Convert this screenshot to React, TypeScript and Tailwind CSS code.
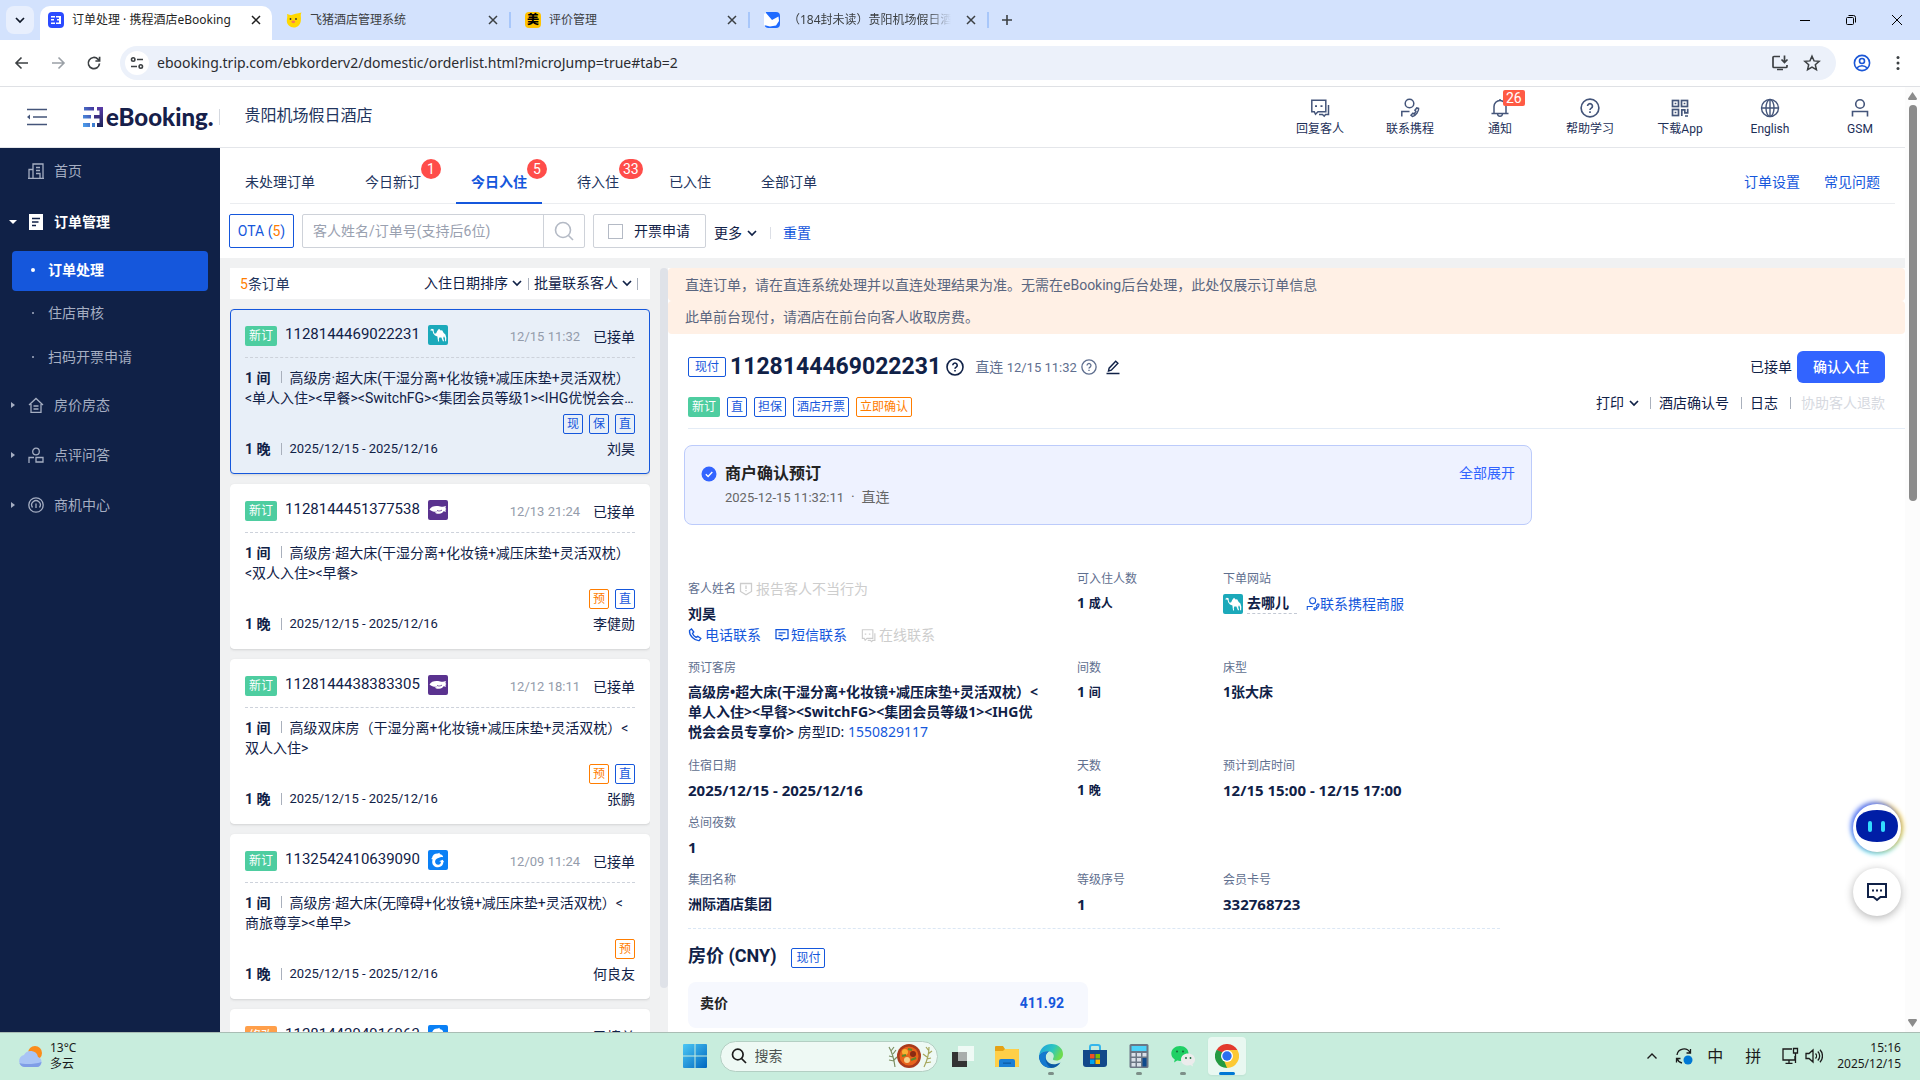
import type { ReactNode } from 'react'

const appFont = "font-['Roboto','Noto_Sans_CJK_SC',sans-serif]"
const systemFont = "font-['Noto_Sans','Noto_Sans_CJK_SC',sans-serif]"

type Tone = 'blue' | 'orange'

type Order = {
  id: string
  tag: string
  tagClass: string
  source: 'qunar' | 'elong' | 'ctrip'
  time: string
  lines: string[]
  badges: { text: string; tone: Tone }[]
  guest: string
}

const blue = (text: string) => ({ text, tone: 'blue' as const })
const orange = (text: string) => ({ text, tone: 'orange' as const })

const orders: Order[] = [
  {
    id: '1128144469022231',
    tag: '新订',
    tagClass: 'bg-[#4ecda0]',
    source: 'qunar',
    time: '12/15 11:32',
    lines: ['高级房·超大床(干湿分离+化妆镜+减压床垫+灵活双枕）', '<单人入住><早餐><SwitchFG><集团会员等级1><IHG优悦会会员专享价>'],
    badges: [blue('现'), blue('保'), blue('直')],
    guest: '刘昊',
  },
  {
    id: '1128144451377538',
    tag: '新订',
    tagClass: 'bg-[#4ecda0]',
    source: 'elong',
    time: '12/13 21:24',
    lines: ['高级房·超大床(干湿分离+化妆镜+减压床垫+灵活双枕）', '<双人入住><早餐>'],
    badges: [orange('预'), blue('直')],
    guest: '李健勋',
  },
  {
    id: '1128144438383305',
    tag: '新订',
    tagClass: 'bg-[#4ecda0]',
    source: 'elong',
    time: '12/12 18:11',
    lines: ['高级双床房（干湿分离+化妆镜+减压床垫+灵活双枕）<', '双人入住>'],
    badges: [orange('预'), blue('直')],
    guest: '张鹏',
  },
  {
    id: '1132542410639090',
    tag: '新订',
    tagClass: 'bg-[#4ecda0]',
    source: 'ctrip',
    time: '12/09 11:24',
    lines: ['高级房·超大床(无障碍+化妆镜+减压床垫+灵活双枕）<', '商旅尊享><单早>'],
    badges: [orange('预')],
    guest: '何良友',
  },
  {
    id: '1128144294916963',
    tag: '修改',
    tagClass: 'bg-[#ff9f4a]',
    source: 'ctrip',
    time: '12/01 21:45',
    lines: ['高级房·超大床(干湿分离+化妆镜+减压床垫+灵活双枕）', '<双人入住><早餐>'],
    badges: [orange('预')],
    guest: '王伟',
  },
]

/* ---------- icons ---------- */

function Icon({ size = 16, stroke = 1.5, className = '', box = 24, children }: { size?: number; stroke?: number; className?: string; box?: number; children: ReactNode }) {
  return (
    <svg width={size} height={size} viewBox={`0 0 ${box} ${box}`} fill="none" stroke="currentColor" strokeWidth={stroke} className={`shrink-0 ${className}`} aria-hidden="true">
      {children}
    </svg>
  )
}

function Chevron({ size = 12, className = '' }: { size?: number; className?: string }) {
  return (
    <Icon size={size} box={12} stroke={1.7} className={className}>
      <path d="M2 4l4 4 4-4" />
    </Icon>
  )
}

function CloseIcon({ className = '' }: { className?: string }) {
  return (
    <Icon size={16} box={16} className={className}>
      <path d="M4 4l8 8M12 4l-8 8" />
    </Icon>
  )
}

function QuestionIcon({ size = 18, className = '', stroke = 1.5 }: { size?: number; className?: string; stroke?: number }) {
  return (
    <Icon size={size} box={18} stroke={stroke} className={className}>
      <circle cx="9" cy="9" r="8" />
      <path d="M6.8 7.2a2.2 2.2 0 1 1 3.4 1.9c-.8.5-1.2.8-1.2 1.7" />
      <path d="M9 12v1.5" />
    </Icon>
  )
}

function ContactIcon({ size = 20 }: { size?: number }) {
  return (
    <Icon size={size} box={20}>
      <circle cx="9.5" cy="5.5" r="4.3" />
      <path d="M1.8 18.5v-5h7.7" />
      <path d="M18.6 10.3c.6 2.3-2.9 7.7-6.1 8.2l-1.5-1.4 1.9-2 1.3.8 1.7-2.6-1-1.1 1.9-2.3z" />
    </Icon>
  )
}

function ChatIcon({ size = 20, className = '' }: { size?: number; className?: string }) {
  return (
    <Icon size={size} box={20} className={className}>
      <path d="M1.8 2.3h14v11.5H8l-2.5 2.5-1.2-2.5H1.8z" />
      <path d="M18.5 7v9.5h-3l-1.3 1.7-1.7-1.7H9" />
      <path d="M6 7.3v1.8M11.5 7.3v1.8" strokeWidth="2" />
    </Icon>
  )
}

function SourceIcon({ source }: { source: Order['source'] }) {
  if (source === 'qunar') {
    return (
      <svg width="20" height="20" viewBox="0 0 20 20" className="shrink-0" role="img" aria-label="去哪儿">
        <rect width="20" height="20" rx="2" fill="#1ba9ba" />
        <path d="M2 5.2l1.8-1.4 1.8.5.2 2.7.9 1.7 1.5-.4 1-2.3 1.8-2.2 1.7 1.6 1.4-.2 1.6 2.7 1.7 1.6.9 3.2-.2 3.6h-1l-.1-3-1-2-.8 1.6.9 3.4h-1.2l-1.5-3.8-2.1.1-.5 1.7.3 2.2h-1l-.4-2.5-.3-2.4-2.4-1-1.7-2.2-.8-2.6z" fill="#fff" />
      </svg>
    )
  }
  if (source === 'elong') {
    return (
      <svg width="20" height="20" viewBox="0 0 20 20" className="shrink-0" role="img" aria-label="艺龙">
        <rect width="20" height="20" rx="2" fill="#5a328f" />
        <path d="M1.5 9.5c1.500-2.800 5-3.900 8.500-3.400 1.900.2 3.500 1 5 .7l3-.9-.6 2 .9 1-.9 1 .7 1.900-2.600-.5c-.8 1.500-2.200 2.400-4.300 2.500-1.900.2-3.600-.4-4.500-1.400 1.100 0 1.900-.2 2.500-.7-2.900.5-5.700-.5-7.700-2.200z" fill="#fff" />
        <path d="M9 10.500c1.500.8 3.500.6 5-.4" fill="none" stroke="#5a328f" strokeWidth=".8" />
      </svg>
    )
  }
  return (
    <svg width="20" height="20" viewBox="0 0 20 20" className="shrink-0" role="img" aria-label="携程">
      <rect width="20" height="20" rx="2" fill="#0a80f5" />
      <path d="M4 8c.5-2.900 2.800-4.400 5.300-4.400.8 0 1.400-.6 2.600-.8l-.4 1.200c2.600.4 3.700 1.800 3.600 3.300-1.500-.5-3-.3-4.100.4C8 8.500 6.900 10.100 7.100 12c.2 1.700 1.600 2.800 3.200 2.700 1.700-.1 2.700-1.400 2.600-3l-1.700-.4 3.500-1.600 1.500 2.600-.9-.2c.1 3.100-2.200 5.200-5.200 5.200-3.400 0-5.900-2.300-5.900-5.400 0-1 .2-1.700.5-2.400L3.200 9z" fill="#fff" />
    </svg>
  )
}

/* ---------- browser chrome ---------- */

const inactiveTabs = [
  {
    title: '飞猪酒店管理系统',
    icon: (
      <svg width="16" height="16" viewBox="0 0 16 16" className="shrink-0" aria-hidden="true">
        <path d="M1 2l4 1.200C8 2 11 1.600 15.500.5 14 3 15.500 5 14.800 9c-.6 4-3.300 6.500-7 6.500C4 15.500.8 12.500.8 9 .8 6 1.800 4.800 1 2z" fill="#ffd800" />
        <circle cx="4.5" cy="7" r=".9" fill="#333" />
        <circle cx="10" cy="7" r=".9" fill="#333" />
        <ellipse cx="7.3" cy="9.8" rx="1.9" ry="1.4" fill="#f4795b" />
      </svg>
    ),
  },
  {
    title: '评价管理',
    icon: <span className="flex size-4 shrink-0 items-center justify-center rounded-sm bg-[#ffc300] text-xs font-black text-black">美</span>,
  },
  {
    title: '（184封未读）贵阳机场假日酒店',
    icon: (
      <svg width="16" height="16" viewBox="0 0 16 16" className="shrink-0" aria-hidden="true">
        <path d="M2 0h10a4 4 0 0 1 4 4v8a4 4 0 0 1-4 4H4a4 4 0 0 1-3-1.5z" fill="#1f6bff" />
        <path d="M0 2l2-1 6 7 6.500-3.500L15 9l-3 4.500-6 1L0 13z" fill="#fff" />
      </svg>
    ),
  },
]

function TabStrip() {
  return (
    <div className="flex h-10 items-end bg-[#d3e2fd] pl-1.5 text-xs">
      <button aria-label="搜索标签页" className="mr-1.5 mb-1.5 flex size-7 items-center justify-center rounded-lg bg-[#e8effd] text-gray-900">
        <Chevron />
      </button>
      <div className="flex h-[34px] w-[232px] items-center rounded-t-[10px] bg-white px-2 pb-1.5 text-[#1f1f1f]">
        <span className="flex size-4 items-center justify-center rounded-sm bg-[#2b4bff]">
          <svg width="10" height="8" viewBox="0 0 10 8" aria-hidden="true">
            <path d="M0 0h4v1.500H0zM0 3h3v1.500H0zM0 6.500h4V8H0zM5 0h5v8H5V6.500h3v-2H6V3h2V1.500H5z" fill="#fff" />
          </svg>
        </span>
        <span className="ml-2 flex-1 whitespace-nowrap">订单处理 · 携程酒店eBooking</span>
        <button aria-label="关闭">
          <CloseIcon />
        </button>
      </div>
      {inactiveTabs.map((tab, i) => (
        <div key={tab.title} className="flex h-[34px] w-[239px] items-center pb-1.5 pl-3.5 text-[#3c4043]">
          {tab.icon}
          <span className={`ml-2 w-[164px] overflow-hidden whitespace-nowrap ${i === 2 ? 'mask-r-from-85%' : ''}`}>{tab.title}</span>
          <button aria-label="关闭" className="ml-3">
            <CloseIcon />
          </button>
          <span className="ml-2 h-4 w-0.5 shrink-0 bg-[#a8c7fa]" />
        </div>
      ))}
      <button aria-label="新标签页" className="mb-3 ml-2.5 text-[#3c4043]">
        <Icon size={16} box={16} stroke={1.6}>
          <path d="M8 3v10M3 8h10" />
        </Icon>
      </button>
      <div className="mr-[17px] mb-3.5 ml-auto flex items-center gap-[34px] text-black">
        <button aria-label="最小化">
          <Icon size={12} box={12} stroke={1}>
            <path d="M1 6.5h10" />
          </Icon>
        </button>
        <button aria-label="还原">
          <Icon size={12} box={12} stroke={1}>
            <rect x="1.5" y="3.5" width="7" height="7" rx="1" />
            <path d="M3.5 1.5h5a2 2 0 0 1 2 2v5" />
          </Icon>
        </button>
        <button aria-label="关闭窗口">
          <Icon size={12} box={12} stroke={1}>
            <path d="M1 1l10 10M11 1L1 11" />
          </Icon>
        </button>
      </div>
    </div>
  )
}

function AddressBar() {
  return (
    <div className="flex h-[47px] items-center border-b border-[#dfe1e5] bg-white px-3 text-[#3c4043]">
      <div className="flex w-[108px] items-center gap-4">
        <button aria-label="后退">
          <Icon size={20} box={20} stroke={1.6}>
            <path d="M16 10H4M9.5 4.500L4 10l5.500 5.500" />
          </Icon>
        </button>
        <button aria-label="前进" className="text-[#9aa0a6]">
          <Icon size={20} box={20} stroke={1.6}>
            <path d="M4 10h12M10.5 4.500L16 10l-5.500 5.500" />
          </Icon>
        </button>
        <button aria-label="重新加载">
          <Icon size={20} box={20} stroke={1.7}>
            <path d="M15.5 10.500a5.600 5.600 0 1 1-1.600-4.400l1.500 1.700" />
            <path d="M15.6 3.800v4.200h-4.200" />
          </Icon>
        </button>
      </div>
      <div className="flex h-[34px] flex-1 items-center rounded-full bg-[#ecf1fa] pr-[15px] pl-[5px]">
        <button aria-label="查看网站信息" className="flex size-6 items-center justify-center rounded-full bg-white">
          <Icon size={14} box={14} stroke={1.6}>
            <circle cx="3.2" cy="3.5" r="1.7" />
            <path d="M7 3.5h6M1 10.5h6" />
            <circle cx="10.8" cy="10.5" r="1.7" />
          </Icon>
        </button>
        <input aria-label="地址" readOnly value="ebooking.trip.com/ebkorderv2/domestic/orderlist.html?microJump=true#tab=2" className="ml-2 min-w-0 flex-1 bg-transparent text-sm text-[#2b2c30] outline-none" />
        <Icon size={18} box={18} stroke={1.7}>
          <path d="M9 2.5H3a1 1 0 0 0-1 1v9a1 1 0 0 0 1 1h12a1 1 0 0 0 1-1V11" />
          <path d="M6 15.5h6M13.5 1.500v6.500M10.5 5.500l3 3 3-3" />
        </Icon>
        <Icon size={18} className="ml-3.5" stroke={2}>
          <path d="M12 3l2.700 6.200 6.800.6-5.100 4.500 1.500 6.600L12 17.400l-5.900 3.500 1.500-6.600L2.500 9.800l6.800-.6z" />
        </Icon>
      </div>
      <button aria-label="个人资料" className="ml-4 text-[#1a56d6]">
        <Icon size={20} box={20} stroke={1.6}>
          <circle cx="10" cy="10" r="7.6" />
          <circle cx="10" cy="8" r="2.5" />
          <path d="M4.8 15c2.600-3 7.800-3 10.400 0" />
        </Icon>
      </button>
      <button aria-label="更多" className="ml-4">
        <svg width="20" height="20" viewBox="0 0 20 20" fill="currentColor" aria-hidden="true">
          <circle cx="10" cy="4.5" r="1.5" />
          <circle cx="10" cy="10" r="1.5" />
          <circle cx="10" cy="15.5" r="1.5" />
        </svg>
      </button>
    </div>
  )
}

/* ---------- page header and side menu ---------- */

const headerLinks: { text: string; badge?: string; icon: ReactNode }[] = [
  { text: '回复客人', icon: <ChatIcon /> },
  { text: '联系携程', icon: <ContactIcon /> },
  {
    text: '通知',
    badge: '26',
    icon: (
      <Icon size={20} box={20}>
        <path d="M1.5 15.5h17M4 15.5V8.500a6 6 0 0 1 12 0v7M10 1v1.500M7.500 16c.5 3 4.500 3 5 0" />
      </Icon>
    ),
  },
  { text: '帮助学习', icon: <QuestionIcon size={20} /> },
  {
    text: '下载App',
    icon: (
      <Icon size={20} box={20} stroke={1.7}>
        <rect x="2.5" y="2.5" width="6" height="6" />
        <rect x="11.5" y="2.5" width="6" height="6" />
        <rect x="2.5" y="11.5" width="6" height="6" />
        <path d="M5.5 4.800v1.500M14.5 4.800v1.500M5.5 13.800v1.500M11.8 18v-6.200h3v3h2.900v-4M15 18h3" />
      </Icon>
    ),
  },
  {
    text: 'English',
    icon: (
      <Icon size={20} box={20} stroke={1.4}>
        <circle cx="10" cy="10" r="8.5" />
        <ellipse cx="10" cy="10" rx="4" ry="8.5" />
        <path d="M1.5 10h17M10 1.500v17" />
      </Icon>
    ),
  },
  {
    text: 'GSM',
    icon: (
      <Icon size={20} box={20} stroke={1.6}>
        <circle cx="10" cy="6" r="4.3" />
        <path d="M2.5 18.500v-5h15v5" />
      </Icon>
    ),
  },
]

function PageHeader() {
  return (
    <header className="flex h-[61px] shrink-0 items-center border-b border-[#e4e6ea] bg-white pl-[27px]">
      <button aria-label="收起菜单" className="text-[#44557a]">
        <Icon size={20} box={20} stroke={1.6}>
          <path d="M0 2.500h20M6 10h14M0 17.500h20" />
          <path d="M3 7.500v5L0 10z" fill="currentColor" stroke="none" />
        </Icon>
      </button>
      <a href="#" className="ml-9 flex items-center text-[#16204a]">
        <svg width="20" height="20" viewBox="0 0 20 20" aria-hidden="true">
          <defs>
            <linearGradient id="logo" x1="1" y1="0" x2="0" y2="1">
              <stop offset="0" stopColor="#43349a" />
              <stop offset="1" stopColor="#4aa3f0" />
            </linearGradient>
            <linearGradient id="logo3" x1="0" y1="0" x2="0" y2="1">
              <stop offset="0" stopColor="#5a3aa8" />
              <stop offset="1" stopColor="#1c2458" />
            </linearGradient>
          </defs>
          <path d="M1 0h10v3.500H1zM0 8h8v3.500H0zM0 16h7v4H0z" fill="url(#logo)" />
          <path d="M9 16h3v4H9z" fill="#3e7fd0" />
          <path d="M14 0h6v20h-6v-4h2.500v-4.500H11V8h5.500V3.500H14z" fill="url(#logo3)" />
        </svg>
        <span className="ml-[3px] font-['Lato',sans-serif] text-2xl leading-6 font-black">eBooking.</span>
      </a>
      <span className="ml-1.5 h-4 w-px bg-[#d5d9e0]" />
      <h1 className="ml-6 pb-0.5 text-base text-[#22355e]">贵阳机场假日酒店</h1>
      <nav className="ml-auto flex">
        {headerLinks.map((link) => (
          <a key={link.text} href="#" className="relative flex w-[90px] flex-col items-center gap-[3px] text-xs leading-4 text-[#1d2f58]">
            <span className="text-[#44557a]">{link.icon}</span>
            {link.text}
            {link.badge && <span className="absolute -top-2 left-12 flex h-4 items-center rounded-xs bg-[#ff5b45] px-[3px] text-sm text-white">{link.badge}</span>}
          </a>
        ))}
      </nav>
    </header>
  )
}

function SideCaret({ open = false }: { open?: boolean }) {
  return (
    <svg width="8" height="8" viewBox="0 0 8 8" fill="currentColor" aria-hidden="true">
      {open ? <path d="M0 2h8L4 6z" /> : <path d="M2 1v6l4-3z" />}
    </svg>
  )
}

const sideGroups = [
  {
    text: '房价房态',
    icon: <path d="M1 8L8 1.500 15 8M3 7v8.500h10V7M5.5 9h5M5.5 12h5" />,
  },
  {
    text: '点评问答',
    icon: (
      <>
        <circle cx="8" cy="4.5" r="3.3" />
        <path d="M1 16v-5.500h5M8 10.500h7v4.500H8z" />
      </>
    ),
  },
  {
    text: '商机中心',
    icon: (
      <>
        <circle cx="8" cy="8" r="7.2" />
        <path d="M4.5 10.500a4.300 4.300 0 1 1 7 0M8 6.500v4.500" />
      </>
    ),
  },
]

function Sidebar() {
  return (
    <aside className="w-[220px] shrink-0 bg-[#102147] text-sm leading-5 text-[#a5aec2]">
      <a href="#" className="flex h-[46px] items-center pl-7">
        <Icon box={16} stroke={1.3}>
          <path d="M1 15.300V6.500h4M5 15.300V1h10v14.300M0 15.300h16M8 4.500h4M8 7.500h4M8 10.500h4v4.500" />
        </Icon>
        <span className="ml-2.5">首页</span>
      </a>
      <a href="#" className="mt-2 flex h-10 items-center pl-[9px] font-bold text-white">
        <SideCaret open />
        <svg width="16" height="16" viewBox="0 0 16 16" className="ml-[11px]" aria-hidden="true">
          <path d="M1 0h14v16H1z" fill="#fff" />
          <path d="M4 4.500h8M4 8h6.500M4 11.500h4" stroke="#102147" strokeWidth="1.4" />
        </svg>
        <span className="ml-2.5">订单管理</span>
      </a>
      <a href="#" className="mx-3 mt-[9px] flex h-10 items-center rounded-sm bg-[#1557dc] pb-0.5 pl-[19px] font-bold text-white">
        <span className="size-1 rounded-full bg-white" />
        <span className="ml-[13px]">订单处理</span>
      </a>
      {['住店审核', '扫码开票申请'].map((text) => (
        <a key={text} href="#" className="mx-3 flex h-11 items-center pl-5">
          <span className="size-0.5 rounded-full bg-current" />
          <span className="ml-3.5">{text}</span>
        </a>
      ))}
      {sideGroups.map((group) => (
        <a key={group.text} href="#" className="mt-0.5 mb-1 flex h-12 items-center pl-[9px] not-last:mb-0">
          <SideCaret />
          <Icon box={16} stroke={1.3} className="ml-[11px]">
            {group.icon}
          </Icon>
          <span className="ml-2.5">{group.text}</span>
        </a>
      ))}
    </aside>
  )
}

/* ---------- orders ---------- */

const orderTabs: { text: string; badge?: string; active?: boolean }[] = [
  { text: '未处理订单' },
  { text: '今日新订', badge: '1' },
  { text: '今日入住', badge: '5', active: true },
  { text: '待入住', badge: '33' },
  { text: '已入住' },
  { text: '全部订单' },
]

function OrderTabs() {
  return (
    <div className="mx-2.5 flex h-14 items-end border-b border-[#ebedf0] text-sm leading-5">
      <nav className="flex flex-1 gap-5">
        {orderTabs.map((tab) => (
          <a key={tab.text} href="#" className={`relative -mb-px border-b-2 px-[15px] pb-2.5 ${tab.active ? 'border-[#1557dc] font-bold text-[#1557dc]' : 'border-transparent text-[#22355e]'}`}>
            {tab.text}
            {tab.badge && <span className="absolute -top-[13px] left-full -ml-[15px] flex h-5 min-w-5 items-center justify-center rounded-full bg-[#ff4d4a] px-1 font-normal text-white">{tab.badge}</span>}
          </a>
        ))}
      </nav>
      <a href="#" className="mr-6 mb-[11px] text-[#1557dc]">订单设置</a>
      <a href="#" className="mr-[15px] mb-[11px] text-[#1557dc]">常见问题</a>
    </div>
  )
}

function Filters() {
  return (
    <div className="flex h-[54px] items-center px-[9px] text-sm text-[#102147]">
      <button className="h-[34px] w-[65px] rounded-xs border border-[#1557dc] text-[#1557dc]">
        OTA (<span className="text-[#ff7d00]">5</span>)
      </button>
      <div className="ml-2 flex h-[34px] w-[283px] rounded-xs border border-[#ced2d9]">
        <input aria-label="客人姓名或订单号" placeholder="客人姓名/订单号(支持后6位)" className="min-w-0 flex-1 px-2.5 outline-none placeholder:text-[#9aa1b0]" />
        <button aria-label="搜索" className="flex w-[41px] items-center justify-center border-l border-[#ced2d9] text-[#b4bac5]">
          <Icon size={20} box={20} stroke={1.6}>
            <circle cx="9" cy="9" r="7.5" />
            <path d="M14.5 14.500L19 19" />
          </Icon>
        </button>
      </div>
      <label className="ml-2 flex h-[34px] w-[113px] items-center rounded-xs border border-[#ced2d9] pl-3.5">
        <input type="checkbox" className="size-[15px] appearance-none border border-[#b4bac5] bg-white" />
        <span className="ml-[11px]">开票申请</span>
      </label>
      <button className="ml-2 flex items-center gap-1 pt-1">
        更多 <Chevron />
      </button>
      <span className="mx-3 mt-1 h-3 w-px bg-[#dcdfe6]" />
      <button className="pt-1 text-[#1557dc]">重置</button>
    </div>
  )
}

function Badge({ text, tone, className = 'px-[3px]' }: { text: string; tone: Tone; className?: string }) {
  return (
    <span className={`flex h-5 items-center rounded-xs border text-xs leading-4 ${className} ${tone === 'blue' ? 'border-[#1557dc] text-[#1557dc]' : 'border-[#ff7d00] text-[#ff7d00]'}`}>{text}</span>
  )
}

function Bar({ className = '' }: { className?: string }) {
  return <span className={`inline-block h-3 w-px bg-[#a9b0bc] ${className}`} />
}

function OrderCard({ order, selected }: { order: Order; selected: boolean }) {
  return (
    <article className={`h-[165px] shrink-0 rounded-sm border px-3.5 pt-[15px] text-sm leading-5 text-[#102147] shadow-sm ${selected ? 'border-[#1557dc] bg-[#e8eff8]' : 'border-white bg-white'}`}>
      <div className="flex h-[33px] items-start border-b border-dashed border-[#cdd2db]">
        <span className={`mt-px flex h-5 items-center rounded-xs px-1 text-xs text-white ${order.tagClass}`}>{order.tag}</span>
        <span className="ml-2 text-[15px] leading-[18px]">{order.id}</span>
        <span className="ml-2">
          <SourceIcon source={order.source} />
        </span>
        <span className="mt-0.5 ml-auto text-[13px] text-[#949cab]">{order.time}</span>
        <span className="mt-0.5 ml-[13px]">已接单</span>
      </div>
      <p className="mt-2.5 truncate">
        <b>1 间</b>
        <Bar className="mr-2 ml-2.5" />
        {order.lines[0]}
      </p>
      <p className="truncate">{order.lines[1]}</p>
      <div className="mt-1.5 flex justify-end gap-1.5">
        {order.badges.map((badge) => (
          <Badge key={badge.text} {...badge} />
        ))}
      </div>
      <div className="mt-[5px] flex items-center">
        <b>1 晚</b>
        <Bar className="mr-2 ml-2.5" />
        <span className="text-[13px]">2025/12/15 - 2025/12/16</span>
        <span className="ml-auto">{order.guest}</span>
      </div>
    </article>
  )
}

function OrderList() {
  return (
    <section className="flex shrink-0 bg-[#f0f1f2] pt-2.5 pl-2.5">
      <div className="flex w-[420px] flex-col gap-2.5 overflow-hidden">
        <div className="flex h-[31px] shrink-0 items-center bg-white pr-3 pl-2.5 text-sm text-[#22355e]">
          <span className="text-[#ff7d00]">5</span>条订单
          <button className="ml-auto flex items-center gap-[3px] pb-0.5 text-[#102147]">
            入住日期排序 <Chevron />
          </button>
          <Bar className="mx-[5px]" />
          <button className="flex items-center gap-[3px] pb-0.5 text-[#102147]">
            批量联系客人 <Chevron />
          </button>
          <Bar className="ml-1" />
        </div>
        {orders.map((order, i) => (
          <OrderCard key={order.id} order={order} selected={i === 0} />
        ))}
      </div>
      <div className="ml-2.5 w-2">
        <div className="h-[720px] rounded-full bg-[#dfe2e8]" />
      </div>
    </section>
  )
}

function Field({ label, tight = false, numeric = false, children }: { label: string; tight?: boolean; numeric?: boolean; children?: ReactNode }) {
  return (
    <div>
      <dt className="text-xs leading-5 text-[#5f6f8f]">{label}</dt>
      <dd className={`font-bold ${numeric ? 'text-[15px] leading-5' : ''} ${tight ? 'mt-1' : 'mt-1.5'}`}>{children}</dd>
    </div>
  )
}

function DetailHeader() {
  return (
    <div className="ml-5 flex justify-between border-b border-[#e4ecf6] pt-[17px] pb-[11px] text-sm leading-5 text-[#102147]">
      <div>
        <div className="flex h-8 items-center">
          <Badge text="现付" tone="blue" className="px-1.5" />
          <h2 className="ml-1 text-[23px] font-bold">1128144469022231</h2>
          <QuestionIcon className="ml-[5px]" stroke={1.6} />
          <span className="ml-[11px] text-[#5f6f8f]">
            直连 <span className="text-[13px]">12/15 11:32</span>
          </span>
          <QuestionIcon size={16} className="ml-1 text-[#5f6f8f]" />
          <button aria-label="编辑" className="ml-2">
            <Icon box={16} stroke={1.4}>
              <path d="M1.5 14.500h13M3.5 12l.6-2.800 6.600-7 2.200 2-6.600 7z" />
            </Icon>
          </button>
        </div>
        <div className="mt-3.5 flex gap-[7px]">
          <span className="flex h-5 items-center rounded-xs bg-[#4ecda0] px-1 text-xs text-white">新订</span>
          <Badge text="直" tone="blue" />
          <Badge text="担保" tone="blue" />
          <Badge text="酒店开票" tone="blue" />
          <Badge text="立即确认" tone="orange" />
        </div>
      </div>
      <div className="mr-5">
        <div className="flex h-8 items-center justify-end">
          已接单
          <button className="ml-[5px] h-8 rounded-md bg-[#3264ff] px-4 font-medium text-white">确认入住</button>
        </div>
        <div className="mt-2.5 flex items-center">
          <button className="flex items-center gap-1">
            打印 <Chevron />
          </button>
          <Bar className="mr-2 ml-2.5" />
          <button>酒店确认号</button>
          <Bar className="mr-2 ml-3" />
          <button>日志</button>
          <Bar className="mr-2.5 ml-3" />
          <button disabled className="text-[#d6d9df]">协助客人退款</button>
        </div>
      </div>
    </div>
  )
}

function Timeline() {
  return (
    <div className="mt-4 ml-4 flex h-20 max-w-[848px] rounded-lg border border-[#bccbfb] bg-[#eef2ff] px-4 pt-4 text-sm">
      <svg width="16" height="16" viewBox="0 0 16 16" className="mt-1 shrink-0" aria-hidden="true">
        <circle cx="8" cy="8" r="7.5" fill="#3264ff" />
        <path d="M4.8 8.200l2.300 2.200 4.200-4.300" fill="none" stroke="#fff" strokeWidth="1.4" />
      </svg>
      <div className="ml-2">
        <h3 className="text-base leading-6 font-bold text-[#222]">商户确认预订</h3>
        <p className="leading-[22px] text-[#666]">
          <span className="text-[13px]">2025-12-15 11:32:11</span> &nbsp;·&nbsp; 直连
        </p>
      </div>
      <button className="ml-auto h-[22px] text-[#3264ff]">全部展开</button>
    </div>
  )
}

function GuestInfo() {
  return (
    <dl className={`mt-11 ml-5 max-w-[812px] border-b border-dashed border-[#dbe7f5] pb-px text-sm leading-5 text-[#102147] ${systemFont} [&>div]:grid [&>div]:grid-cols-[389px_146px_1fr] [&>div]:pb-[13px]`}>
      <div>
        <div className="pt-2.5">
          <dt className="flex items-center text-xs leading-5 text-[#5f6f8f]">
            客人姓名
            <a href="#" className="ml-[3px] flex items-center text-sm leading-5 text-[#cdcdcd]">
              <Icon size={14} box={14} stroke={1.3}>
                <path d="M1.5 1.500h11v8L7 12.700 1.500 9.500zM7 3.500V7M7 8v1.300" />
              </Icon>
              <span className="ml-[3px]">报告客人不当行为</span>
            </a>
          </dt>
          <dd className="mt-[5px] font-bold">刘昊</dd>
          <dd className="mt-px flex items-center text-[#1557dc]">
            <a href="#" className="flex items-center gap-[3px]">
              <Icon size={14} box={14} stroke={1.3}>
                <path d="M1.5 2.500L3.500 1l2.300 3-1.300 1.500c.6 1.600 2 3 3.600 3.900L9.800 8.200l3 2.200-1.600 2.200C6.500 13 1 7.500 1.500 2.500z" />
              </Icon>
              电话联系
            </a>
            <a href="#" className="ml-3.5 flex items-center gap-0.5">
              <Icon size={14} box={14} stroke={1.3}>
                <path d="M1 1.700h12v9H8.500L7 12.500l-1.500-1.800H1zM3.5 4.800h7M3.5 7.500h4" />
              </Icon>
              短信联系
            </a>
            <a href="#" className="ml-3.5 flex items-center gap-[3px] text-[#cdcdcd]">
              <ChatIcon size={15} />
              在线联系
            </a>
          </dd>
        </div>
        <Field label="可入住人数" tight>
          1 <span className="text-xs">成人</span>
        </Field>
        <Field label="下单网站" tight>
          <span className="flex items-center">
            <SourceIcon source="qunar" />
            <span className="ml-1 border-b border-dashed border-[#c3c9d4] pr-2 leading-5">去哪儿</span>
            <a href="#" className="ml-[9px] flex items-center font-normal text-[#1557dc]">
              <ContactIcon size={14} />
              联系携程商服
            </a>
          </span>
        </Field>
      </div>
      <div>
        <Field label="预订客房" tight>
          高级房•超大床(干湿分离+化妆镜+减压床垫+灵活双枕）&lt;
          <br />
          单人入住&gt;&lt;早餐&gt;&lt;SwitchFG&gt;&lt;集团会员等级1&gt;&lt;IHG优
          <br />
          悦会会员专享价&gt;{' '}
          <span className="font-normal">
            房型ID:{' '}
            <a href="#" className="text-[#1557dc]">1550829117</a>
          </span>
        </Field>
        <Field label="间数" tight>
          1 <span className="text-xs">间</span>
        </Field>
        <Field label="床型" tight>1张大床</Field>
      </div>
      <div className="pt-px">
        <Field label="住宿日期" tight numeric>2025/12/15 - 2025/12/16</Field>
        <Field label="天数" tight>
          1 <span className="text-xs">晚</span>
        </Field>
        <Field label="预计到店时间" tight numeric>12/15 15:00 - 12/15 17:00</Field>
      </div>
      <div>
        <Field label="总间夜数" tight numeric>1</Field>
      </div>
      <div>
        <Field label="集团名称" tight>洲际酒店集团</Field>
        <Field label="等级序号" tight numeric>1</Field>
        <Field label="会员卡号" tight numeric>332768723</Field>
      </div>
    </dl>
  )
}

function OrderDetail() {
  return (
    <section className="min-w-0 flex-1 overflow-hidden bg-white">
      <div className="h-2.5 bg-[#f0f1f2]" />
      <p className="flex h-[33px] items-center rounded-sm bg-[#fff0e5] px-[17px] text-sm text-[#5a6680]">直连订单，请在直连系统处理并以直连处理结果为准。无需在eBooking后台处理，此处仅展示订单信息</p>
      <p className="flex h-[33px] items-center rounded-sm bg-[#fff0e5] px-[17px] pb-0.5 text-sm text-[#5a6680]">此单前台现付，请酒店在前台向客人收取房费。</p>
      <DetailHeader />
      <Timeline />
      <GuestInfo />
      <div className="mt-3.5 ml-5 flex h-7 items-center text-[#102147]">
        <h3 className="pb-0.5 text-lg font-bold">房价 (CNY)</h3>
        <span className="mt-0.5 ml-[15px]">
          <Badge text="现付" tone="blue" className="px-1" />
        </span>
      </div>
      <div className="mt-[11px] ml-5 flex h-[46px] w-[400px] items-center justify-between rounded-lg bg-[#f6f8fe] pr-6 pb-1 pl-3 text-sm font-bold">
        <span className="text-[#222]">卖价</span>
        <span className="text-[#1557dc]">411.92</span>
      </div>
    </section>
  )
}

function PageScrollbar() {
  return (
    <div className="flex w-[15px] shrink-0 flex-col items-center bg-[#fcfcfc] py-[5px] text-[#8b8b8b]">
      <svg width="9" height="8" viewBox="0 0 9 8" fill="currentColor" aria-hidden="true">
        <path d="M4.5 0L9 6.500 8.500 8h-8L0 6.500z" />
      </svg>
      <div className="mt-[5px] h-[396px] w-2 rounded-full bg-current" />
      <svg width="9" height="8" viewBox="0 0 9 8" fill="currentColor" className="mt-auto" aria-hidden="true">
        <path d="M4.5 8L0 1.500.5 0h8l.5 1.500z" />
      </svg>
    </div>
  )
}

function FloatingButtons() {
  return (
    <div className="absolute right-[19px] bottom-[116px] flex flex-col gap-4">
      <button aria-label="智能助手" className="flex size-12 items-center justify-center rounded-full bg-white pb-1 shadow-[-2px_-2px_5px_#5a78ff,2px_-1px_5px_#ffc83c,0_2px_5px_#5adcf0]">
        <svg width="42" height="32" viewBox="0 0 42 32" aria-hidden="true">
          <path d="M21 0c13 0 21 5 21 16s-8 16-21 16S0 27 0 16 8 0 21 0z" fill="#001ea6" />
          <rect x="12" y="11" width="4" height="11" rx="2" fill="#33dcff" />
          <rect x="25" y="11" width="4" height="11" rx="2" fill="#33dcff" />
        </svg>
      </button>
      <button aria-label="意见反馈" className="flex size-12 items-center justify-center rounded-full bg-white text-[#102147] shadow-[0_2px_8px_#0000004d]">
        <Icon size={20} box={20} stroke={2}>
          <path d="M1 2h18v13h-5.500L10 18l-3.500-3H1z" />
          <path d="M5 8.500h2M9 8.500h2M13 8.500h2" />
        </Icon>
      </button>
    </div>
  )
}

/* ---------- taskbar ---------- */

function TaskIcon({ label, mark, active = false, children }: { label: string; mark?: boolean; active?: boolean; children: ReactNode }) {
  return (
    <button aria-label={label} className={`flex h-[38px] w-[38px] flex-col items-center rounded-sm pt-[7px] ${active ? 'bg-white/60 shadow-xs' : ''}`}>
      <svg width="24" height="24" viewBox="0 0 24 24" aria-hidden="true">
        {children}
      </svg>
      {mark && <span className={`mt-1 h-[3px] rounded-full ${active ? 'w-4 bg-[#0078d4]' : 'w-1.5 bg-[#7d8f88]'}`} />}
    </button>
  )
}

function Taskbar() {
  return (
    <footer className={`relative flex h-12 shrink-0 items-center justify-center border-t border-[#a9bdb4] bg-[#c8eddd] pb-px text-xs leading-4 text-[#1b1b1b] ${systemFont}`}>
      <div className="absolute left-[18px] flex items-center gap-1.5">
        <svg width="26" height="24" viewBox="0 0 26 24" aria-hidden="true">
          <circle cx="17" cy="9" r="7" fill="#fb8c1a" />
          <path d="M7 23a6 6 0 0 1-1-11.900A7.500 7.500 0 0 1 20 13a5.200 5.200 0 0 1-.5 10z" fill="#a9c4f5" />
          <path d="M7 23a6 6 0 0 1-5.500-4c4 1.500 15 1.500 22-1-.5 3-2.500 5-4.500 5z" fill="#7f9de6" />
        </svg>
        <div>
          <div>13°C</div>
          <div>多云</div>
        </div>
      </div>

      <div className="ml-2 flex items-center gap-1.5">
        <div className="flex items-center gap-[13px]">
          <button aria-label="开始">
            <svg width="24" height="24" viewBox="0 0 24 24" aria-hidden="true">
              <defs>
                <linearGradient id="win" x1="0" y1="0" x2="1" y2="1">
                  <stop offset="0" stopColor="#4cc8f5" />
                  <stop offset="1" stopColor="#0067c0" />
                </linearGradient>
              </defs>
              <path d="M0 1a1 1 0 0 1 1-1h10.500v11.500H0zM12.5 0H23a1 1 0 0 1 1 1v10.500H12.500zM0 12.500h11.500V24H1a1 1 0 0 1-1-1zM12.5 12.500H24V23a1 1 0 0 1-1 1H12.500z" fill="url(#win)" />
            </svg>
          </button>
          <div className="flex h-[31px] w-[218px] items-center rounded-full border border-[#b3cfc3] bg-[#eef9f4] pr-1 pl-2.5">
            <Icon box={16} stroke={1.7}>
              <circle cx="6.8" cy="6.5" r="5.3" />
              <path d="M10.5 10.500L15 15" />
            </Icon>
            <input aria-label="搜索" placeholder="搜索" className="ml-2 w-0 flex-1 text-sm outline-none placeholder:text-[#4c5451]" />
            <svg width="46" height="26" viewBox="0 0 46 26" aria-hidden="true">
              <g stroke="#7c8f62" fill="none" strokeWidth="1.2">
                <path d="M8 24C7 16 5 9 2 4M6 14L2 13M7 18l-5-1M6 11l3-4M7 17l3-3M4 8l3-4" />
                <path d="M37 24c3-6 5-13 5-20M40 16l4-1M41 11l4-3M40 14l-4-3M42 8l-3-4M38 20l6-1" stroke="#a5a65a" />
              </g>
              <circle cx="22" cy="13" r="12" fill="#a93a1c" />
              <circle cx="22" cy="13" r="9.5" fill="#e8641b" />
              <circle cx="18" cy="9" r="3" fill="#f8b133" />
              <circle cx="26" cy="11" r="3" fill="#8b2a12" />
              <circle cx="20" cy="17" r="3" fill="#f6cf8a" />
              <path d="M15 13l4-1M24 17l5-2M21 6l4 1" stroke="#5d8a2a" strokeWidth="2" />
            </svg>
          </div>
        </div>
        <TaskIcon label="任务视图">
          <path d="M1 8h15v15H1z" fill="#333" />
          <path d="M7 2h16v15H7z" fill="#fff" fillOpacity=".7" />
          <path d="M7 8h9v9H7z" fill="#a9aeac" />
        </TaskIcon>
        <TaskIcon label="文件资源管理器">
          <path d="M0 3a1 1 0 0 1 1-1h7l2 3h13a1 1 0 0 1 1 1v16a1 1 0 0 1-1 1H1a1 1 0 0 1-1-1z" fill="#e5a215" />
          <path d="M0 7h8l2-2h13a1 1 0 0 1 1 1v16a1 1 0 0 1-1 1H1a1 1 0 0 1-1-1z" fill="#ffcf48" />
          <path d="M4 17a2 2 0 0 1 2-2h12a2 2 0 0 1 2 2v6H4z" fill="#1b7fd6" />
          <path d="M8 18.500h8v1.300H8z" fill="#0c5ba5" />
        </TaskIcon>
        <TaskIcon label="Edge" mark>
          <defs>
            <linearGradient id="edge" x1="0" y1="0" x2="1" y2=".4">
              <stop offset="0" stopColor="#1b9de2" />
              <stop offset=".6" stopColor="#2dc6c0" />
              <stop offset="1" stopColor="#6ddb4f" />
            </linearGradient>
          </defs>
          <path d="M0 12C1 4 6 0 12.500 0 19 0 24 4.500 24 10c0 4-3 6.500-6.500 6.500-3 0-4.300-1-3.300-2.300 1.500-2 .3-6.200-4.200-6.700C5 7 1.500 9 0 12z" fill="url(#edge)" />
          <path d="M0 12c1.500-3 5-5 10-4.500C6.500 9 6 12.500 7.300 15.800 9 20 15 22 21.500 18.500 19.500 22 16 24 12 24 5 24 0 18.500 0 12z" fill="#0c59a4" />
          <path d="M10 7.500C5.500 9.500 4.500 19 12 24 5 24 0 18.500 0 12c1.500-3 5-5 10-4.500z" fill="#1479cf" />
        </TaskIcon>
        <TaskIcon label="Microsoft Store">
          <path d="M7 6V3a2 2 0 0 1 2-2h6a2 2 0 0 1 2 2v3" fill="none" stroke="#35b6ec" strokeWidth="2" />
          <path d="M0 6h24v14a3 3 0 0 1-3 3H3a3 3 0 0 1-3-3z" fill="#13488a" />
          <path d="M7 10h4.500v4.500H7z" fill="#f25022" />
          <path d="M12.5 10H17v4.500h-4.500z" fill="#7fba00" />
          <path d="M7 15.500h4.500V20H7z" fill="#00a4ef" />
          <path d="M12.5 15.500H17V20h-4.500z" fill="#ffb900" />
        </TaskIcon>
        <TaskIcon label="计算器" mark>
          <rect x="2.5" width="19" height="24" rx="1.5" fill="#6b7785" />
          <path d="M4.5 2h15v5h-15z" fill="#4dd2f8" />
          <path d="M4.5 9h4v3.500h-4zM10 9h4v3.500h-4zM15.5 9h4v3.500h-4zM4.5 14h4v3.500h-4zM10 14h4v3.500h-4zM4.5 19h4v3.500h-4zM10 19h4v3.500h-4z" fill="#d9e0e8" />
          <path d="M15.5 14h4v8.500h-4z" fill="#0e4a8c" />
        </TaskIcon>
        <TaskIcon label="微信" mark>
          <path d="M9 2c5 0 8.500 3.300 8.500 7.500S14 17 9 17c-1 0-2-.2-2.800-.4L3 18.500l.8-3C1.500 14 .3 12 .3 9.500.3 5.300 4 2 9 2z" fill="#20d065" />
          <path d="M17 9.500c4 0 7 2.600 7 6 0 2-.9 3.500-2.500 4.600l.5 2.400-2.600-1.400c-.7.300-1.600.4-2.400.4-4 0-7-2.600-7-6s3-6 7-6z" fill="#ececec" />
          <g fill="#17683a">
            <circle cx="6" cy="7.5" r="1" />
            <circle cx="12" cy="7.5" r="1" />
            <circle cx="15" cy="14" r=".9" />
            <circle cx="19.5" cy="14" r=".9" />
          </g>
        </TaskIcon>
        <TaskIcon label="Chrome" mark active>
          <path d="M12 12L1.600 6A12 12 0 0 1 22.400 6z" fill="#e33b2e" />
          <path d="M12 12l10.400-6A12 12 0 0 1 12 24z" fill="#fcc934" />
          <path d="M12 12v12A12 12 0 0 1 1.600 6z" fill="#249a41" />
          <path d="M12 6h10.400L17.200 15z" fill="#fcc934" />
          <path d="M17.2 15L12 24 8 14z" fill="#fcc934" />
          <path d="M6.8 15L1.600 6 9 9z" fill="#249a41" />
          <circle cx="12" cy="12" r="6" fill="#fff" />
          <circle cx="12" cy="12" r="4.7" fill="#2b6ff0" />
        </TaskIcon>
      </div>

      <div className="absolute right-[19px] flex items-center">
        <Icon size={12} box={12} stroke={1.4}>
          <path d="M1.5 8.500L6 4l4.500 4.500" />
        </Icon>
        <svg width="18" height="18" viewBox="0 0 18 18" className="ml-[17px]" fill="none" stroke="currentColor" strokeWidth="1.3" aria-hidden="true">
          <path d="M2 8a7 7 0 0 1 13-2.500M15.5 2v4h-4M7 16a7 7 0 0 1-5-4.500M1.5 15.500v-4h4" />
          <circle cx="13" cy="13" r="4.5" fill="#0078d4" stroke="none" />
        </svg>
        <span className="ml-3.5 text-base">中</span>
        <span className="ml-[22px] text-base">拼</span>
        <Icon size={18} box={18} stroke={1.3} className="ml-5">
          <path d="M11 2H2v11h12V9M8 13v3M4.5 16.300h7" />
          <path d="M12.5 1.500h4v4.500h-4zM14.5 6v10" />
        </Icon>
        <Icon size={18} box={18} stroke={1.3} className="ml-1.5">
          <path d="M1 6.500h3L8 3v12l-4-3.500H1zM10.5 6.500c1.300 1.300 1.300 3.700 0 5M12.8 4.500c2.500 2.500 2.500 6.500 0 9M15 2.800c3.300 3.500 3.300 9 0 12.400" />
        </Icon>
        <div className="ml-3.5 text-right">
          <div>15:16</div>
          <div>2025/12/15</div>
        </div>
      </div>
    </footer>
  )
}

export default function App() {
  return (
    <div className={`flex h-screen flex-col overflow-hidden bg-white ${appFont}`}>
      <div className={systemFont}>
        <TabStrip />
        <AddressBar />
      </div>
      <div className="relative flex min-h-0 flex-1">
        <div className="flex min-w-0 flex-1 flex-col">
          <PageHeader />
          <div className="flex min-h-0 flex-1">
            <Sidebar />
            <main className="flex min-w-0 flex-1 flex-col">
              <OrderTabs />
              <Filters />
              <div className="flex min-h-0 flex-1">
                <OrderList />
                <OrderDetail />
              </div>
            </main>
          </div>
        </div>
        <PageScrollbar />
        <FloatingButtons />
      </div>
      <Taskbar />
    </div>
  )
}
